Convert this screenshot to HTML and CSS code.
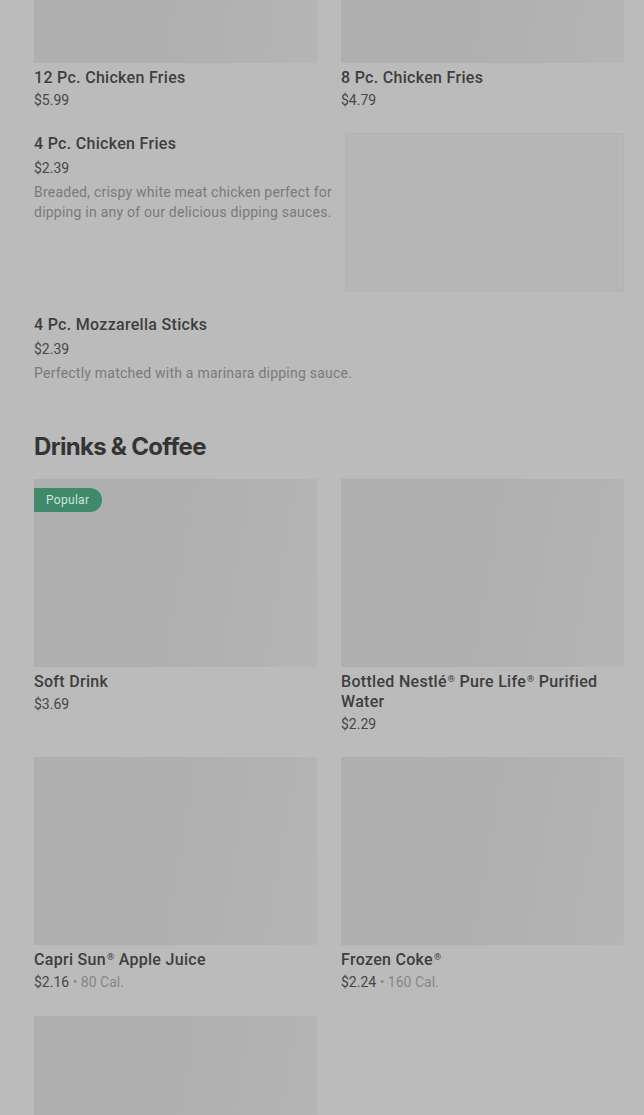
FILE: index.html
```html
<!DOCTYPE html>
<html>
<head>
<meta charset="utf-8">
<link rel="stylesheet" href="styles.css">
</head>
<body>
<main class="page">
  <section class="grid grid-top">
    <div class="card">
      <div class="thumb"></div>
      <div class="title">12 Pc. Chicken Fries</div>
      <div class="price">$5.99</div>
    </div>
    <div class="card">
      <div class="thumb"></div>
      <div class="title">8 Pc. Chicken Fries</div>
      <div class="price">$4.79</div>
    </div>
  </section>

  <section class="list">
    <div class="item">
      <div class="item-text">
        <div class="title">4 Pc. Chicken Fries</div>
        <div class="price price-list">$2.39</div>
        <div class="desc">Breaded, crispy white meat chicken perfect for dipping in any of our delicious dipping sauces.</div>
      </div>
      <div class="item-thumb"></div>
    </div>
    <div class="item">
      <div class="item-text">
        <div class="title">4 Pc. Mozzarella Sticks</div>
        <div class="price price-list">$2.39</div>
        <div class="desc">Perfectly matched with a marinara dipping sauce.</div>
      </div>
    </div>
  </section>

  <h2 class="heading">Drinks &amp; Coffee</h2>

  <section class="grid">
    <div class="card">
      <div class="thumb"><span class="badge">Popular</span></div>
      <div class="title">Soft Drink</div>
      <div class="price">$3.69</div>
    </div>
    <div class="card">
      <div class="thumb"></div>
      <div class="title">Bottled Nestlé<span class="reg">®</span> Pure Life<span class="reg">®</span> Purified Water</div>
      <div class="price">$2.29</div>
    </div>
    <div class="card">
      <div class="thumb"></div>
      <div class="title">Capri Sun<span class="reg">®</span> Apple Juice</div>
      <div class="price">$2.16 <span class="cal">• 80 Cal.</span></div>
    </div>
    <div class="card">
      <div class="thumb"></div>
      <div class="title">Frozen Coke<span class="reg">®</span></div>
      <div class="price">$2.24 <span class="cal">• 160 Cal.</span></div>
    </div>
    <div class="card card-last">
      <div class="thumb"></div>
    </div>
  </section>
</main>
</body>
</html>
```

FILE: styles.css
```css
* { box-sizing: border-box; }
html, body { margin: 0; padding: 0; }
body {
  background: #bbbbbb;
  font-family: Roboto, "Liberation Sans", sans-serif;
  overflow: hidden;
  height: 1115px;
}
.page {
  padding: 0 20px 0 34px;
}
.grid {
  display: grid;
  grid-template-columns: 283px 283px;
  column-gap: 24px;
  row-gap: 23px;
}
.grid-top { margin-top: -125px; }
.card-last { margin-top: 1px; }
.thumb {
  position: relative;
  height: 188px;
  background: linear-gradient(100deg, #afafaf 0%, #b0b0b0 55%, #b5b5b5 100%);
}
.badge {
  position: absolute;
  left: 0;
  top: 9px;
  height: 24px;
  line-height: 24px;
  padding: 0 13px 0 12px;
  background: #3f8a6b;
  color: #d2e3da;
  font-size: 12px;
  letter-spacing: 0.3px;
  border-radius: 0 12px 12px 0;
}
.title {
  font-size: 16px;
  line-height: 20px;
  font-weight: 500;
  letter-spacing: 0.3px;
  color: #3e3e3e;
  margin-top: 5px;
}
.reg {
  display: inline-block;
  font-size: 9px;
  line-height: 10px;
  vertical-align: top;
  margin: 2px 0 0 1px;
}
.price {
  font-size: 14px;
  line-height: 20px;
  color: #474747;
  margin-top: 2px;
}
.cal { color: #868686; }
.list {
  display: flex;
  flex-direction: column;
  gap: 22px;
  margin-top: 23px;
}
.item {
  display: flex;
  gap: 10px;
}
.item-text { flex: 1; padding-top: 1px; }
.item-text .title { margin-top: 0; }
.price-list { margin-top: 4px; }
.desc {
  font-size: 14px;
  line-height: 20px;
  letter-spacing: 0.23px;
  color: #7a7a7a;
  margin-top: 4px;
}
.item-thumb {
  width: 279px;
  height: 159px;
  background: #b6b6b6;
  border: 1px solid #b3b3b3;
}
.heading {
  font-family: Inter, "Liberation Sans", sans-serif;
  font-size: 24px;
  line-height: 32px;
  font-weight: 700;
  letter-spacing: -0.7px;
  color: #343434;
  margin: 48px 0 16px;
}
```
